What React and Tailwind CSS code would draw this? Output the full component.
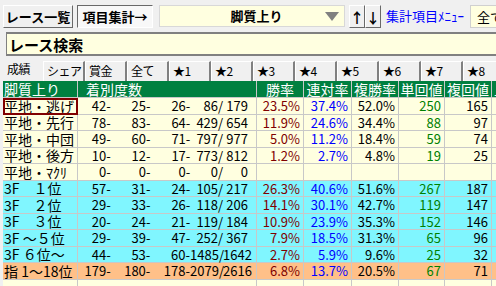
import React from "react";

const rows = [
  { label: "平地・逃げ", c: [42, 25, 26, 86, 179], v: ["23.5%", "37.4%", "52.0%", "250", "165"], bg: "bg-[#ffffe0]", sel: true },
  { label: "平地・先行", c: [78, 83, 64, 429, 654], v: ["11.9%", "24.6%", "34.4%", "88", "97"], bg: "bg-[#ffffe0]" },
  { label: "平地・中団", c: [49, 60, 71, 797, 977], v: ["5.0%", "11.2%", "18.4%", "59", "74"], bg: "bg-[#ffffe0]" },
  { label: "平地・後方", c: [10, 12, 17, 773, 812], v: ["1.2%", "2.7%", "4.8%", "19", "25"], bg: "bg-[#ffffe0]" },
  { label: "平地・ﾏｸﾘ", c: [0, 0, 0, 0, 0], v: ["", "", "", "", ""], bg: "bg-[#ffffe0]" },
  { label: "3F　１位", c: [57, 31, 24, 105, 217], v: ["26.3%", "40.6%", "51.6%", "267", "187"], bg: "bg-[#80f6ff]" },
  { label: "3F　２位", c: [29, 33, 26, 118, 206], v: ["14.1%", "30.1%", "42.7%", "119", "147"], bg: "bg-[#80f6ff]" },
  { label: "3F　３位", c: [20, 24, 21, 119, 184], v: ["10.9%", "23.9%", "35.3%", "152", "146"], bg: "bg-[#80f6ff]" },
  { label: "3F ～５位", c: [29, 39, 47, 252, 367], v: ["7.9%", "18.5%", "31.3%", "65", "96"], bg: "bg-[#80f6ff]" },
  { label: "3F ６位～", c: [44, 53, 60, 1485, 1642], v: ["2.7%", "5.9%", "9.6%", "25", "32"], bg: "bg-[#80f6ff]" },
  { label: "指 1～18位", c: [179, 180, 178, 2079, 2616], v: ["6.8%", "13.7%", "20.5%", "67", "71"], bg: "bg-[#ffc088]" },
];

const valueColors = ["text-[#800000]", "text-[#0000ff]", "text-black", "text-[#008000]", "text-black"];
const tabs = ["シェア", "賞金", "全て", "★1", "★2", "★3", "★4", "★5", "★6", "★7", "★8"];
const heads = ["勝率", "連対率", "複勝率", "単回値", "複回値"];

const tall = "h-[17px] border-r border-b border-[#c8c8c8] leading-[16px]";
const short = "h-[16px] border-r border-b border-[#c8c8c8] leading-[15px]";

function Counts({ c }) {
  return (
    <div className="flex justify-end pr-[8px] text-[13px] whitespace-pre">
      <span className="w-[33px] text-right">{c[0]}-</span>
      <span className="w-[40px] text-right">{c[1]}-</span>
      <span className="w-[40px] text-right">{c[2]}-</span>
      <span className="w-[33px] text-right">{c[3]}/</span>
      <span className="w-[25px] text-right">{c[4]}</span>
    </div>
  );
}

export default function App() {
  return (
    <div className="w-[496px] h-[286px] overflow-hidden bg-[#f0f0f0] text-black font-['Noto_Sans_CJK_JP',sans-serif]">
      {/* top toolbar */}
      <div className="flex items-start h-[32px] pt-[5px] pl-[3px] overflow-hidden">
        <button className="w-[70px] h-[23px] shrink-0 border border-t-white border-l-white border-r-[#696969] border-b-[#696969] bg-[#f0f0f0] text-[13px] font-bold leading-none">
          レース一覧
        </button>
        <button className="ml-[4px] w-[76px] h-[23px] shrink-0 border border-t-[#696969] border-l-[#696969] border-r-white border-b-white bg-[#f8f8f8] text-[13px] font-bold leading-none">
          項目集計→
        </button>
        <div className="ml-[6px] w-[186px] h-[22px] shrink-0 flex items-center bg-[#ffffe0] border border-[#d8d8d8]">
          <span className="flex-1 text-center text-[13px] font-bold pl-[28px]">脚質上り</span>
          <svg width="14" height="9" viewBox="0 0 14 9" className="mr-[5px]">
            <path d="M0 0 H14 L7 9 Z" fill="#808080" />
          </svg>
        </div>
        <div className="ml-[4px] flex shrink-0">
          <button className="w-[16px] h-[23px] border border-t-white border-l-white border-r-[#696969] border-b-[#696969] text-[14px] font-bold leading-none">↑</button>
          <button className="w-[16px] h-[23px] border border-t-white border-l-white border-r-[#696969] border-b-[#696969] text-[14px] font-bold leading-none">↓</button>
        </div>
        <span className="ml-[5px] mt-[3px] shrink-0 text-[13px] text-[#0000ff] leading-[16px] whitespace-nowrap">集計項目ﾒﾆｭｰ</span>
        <div className="ml-[6px] w-[60px] h-[23px] shrink-0 bg-[#ffffe0] border border-[#d0d0d0] text-[13px] leading-[21px] pl-[6px]">
          全て
        </div>
      </div>

      {/* search box */}
      <div className="ml-[6px] h-[24px] bg-[#ffffe0] border-t-2 border-l border-b-2 border-[#808080] flex items-center pl-[2px]">
        <span className="text-[15px] font-bold leading-none">レース検索</span>
      </div>

      {/* tabs */}
      <div className="flex items-end h-[25px] pl-[3px] text-[12px] leading-[14px] tracking-[-0.5px] overflow-hidden">
        <div className="w-[40px] h-[22px] shrink-0 pt-[3px] pl-[4px] bg-[#f0f0f0]">成績</div>
        {tabs.map((t) => (
          <div key={t} className="w-[42px] h-[20px] shrink-0 pt-[2px] pl-[3px] whitespace-nowrap overflow-hidden border-l border-l-white border-r-2 border-r-[#808080] border-t border-t-white">
            {t}
          </div>
        ))}
      </div>

      {/* table */}
      <div className="ml-[3px] grid grid-cols-[75px_179px_47px_48px_47px_46px_47px_40px]">
        <div className={`${tall} bg-[#008040] text-white text-[14px] pl-[1px] border-[#80c0a0]`}>脚質上り</div>
        <div className={`${tall} bg-[#008040] text-white text-[14px] pl-[8px] border-[#80c0a0]`}>着別度数</div>
        {heads.map((h) => (
          <div key={h} className={`${tall} bg-[#008040] text-white text-[14px] text-center border-[#80c0a0]`}>{h}</div>
        ))}
        <div className={`${tall} bg-[#008040] text-white text-[14px] pl-[2px] border-[#80c0a0]`}>上</div>

        {rows.map((r, ri) => {
          const cell = ri % 2 === 0 ? tall : short;
          return (
            <React.Fragment key={r.label}>
              <div className={`${cell} ${r.bg} text-[14px] pl-[1px] whitespace-pre ${r.sel ? "outline-2 -outline-offset-2 outline-[#800000]" : ""}`}>{r.label}</div>
              <div className={`${cell} ${r.bg}`}>
                <Counts c={r.c} />
              </div>
              {r.v.map((v, i) => (
                <div key={i} className={`${cell} ${r.bg} ${valueColors[i]} text-[13px] text-right pr-[3px]`}>{v}</div>
              ))}
              <div className={`${cell} ${r.bg}`}></div>
            </React.Fragment>
          );
        })}
        {[0, 1, 2, 3, 4, 5, 6, 7].map((i) => (
          <div key={i} className={`${short} bg-[#ffffe0]`}></div>
        ))}
      </div>
    </div>
  );
}
